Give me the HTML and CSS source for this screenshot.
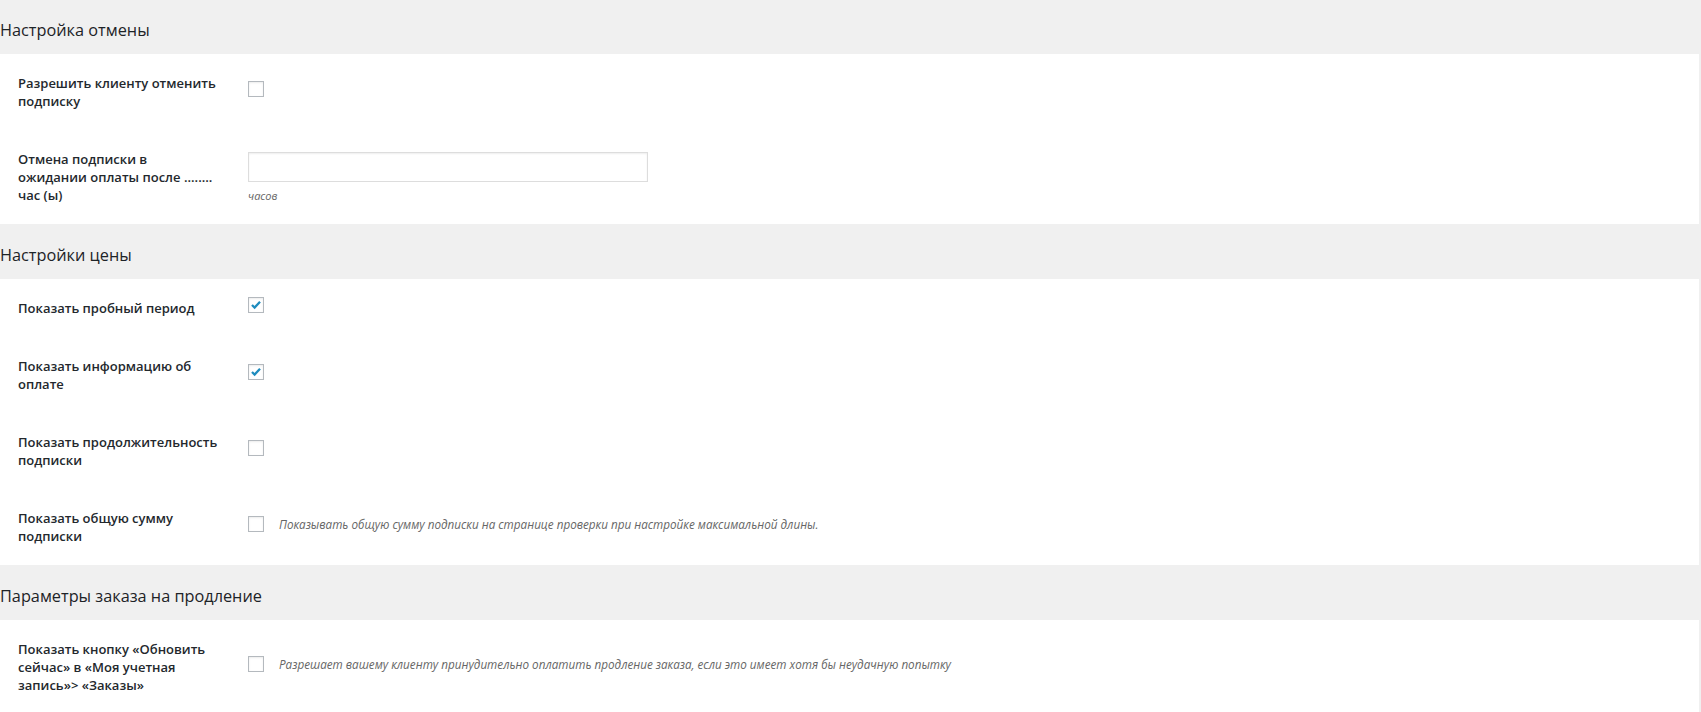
FILE: index.html
```html
<!DOCTYPE html>
<html lang="ru">
<head>
  <meta charset="UTF-8">
  <title>Настройки подписки</title>
  <link rel="stylesheet" href="styles.css">
</head>
<body>
  <h2 class="band first">Настройка отмены</h2>
  <div class="panel">
    <div class="row">
      <div class="label">Разрешить клиенту отменить подписку</div>
      <div class="field"><span class="check"></span></div>
    </div>
    <div class="row">
      <div class="label">Отмена подписки в ожидании оплаты после ........ час (ы)</div>
      <div class="field stack">
        <input class="text-input" type="text">
        <span class="note">часов</span>
      </div>
    </div>
  </div>

  <h2 class="band">Настройки цены</h2>
  <div class="panel">
    <div class="row">
      <div class="label">Показать пробный период</div>
      <div class="field">
        <span class="check">
          <svg viewBox="0 0 16 16" width="16" height="16"><path d="M3.4 8l3 3 6.2-6.8" fill="none" stroke="#1e8cbe" stroke-width="2.6"/></svg>
        </span>
      </div>
    </div>
    <div class="row">
      <div class="label">Показать информацию об оплате</div>
      <div class="field">
        <span class="check">
          <svg viewBox="0 0 16 16" width="16" height="16"><path d="M3.4 8l3 3 6.2-6.8" fill="none" stroke="#1e8cbe" stroke-width="2.6"/></svg>
        </span>
      </div>
    </div>
    <div class="row">
      <div class="label">Показать продолжительность подписки</div>
      <div class="field"><span class="check"></span></div>
    </div>
    <div class="row">
      <div class="label">Показать общую сумму подписки</div>
      <div class="field">
        <span class="check"></span>
        <span class="desc">Показывать общую сумму подписки на странице проверки при настройке максимальной длины.</span>
      </div>
    </div>
  </div>

  <h2 class="band">Параметры заказа на продление</h2>
  <div class="panel">
    <div class="row">
      <div class="label">Показать кнопку «Обновить сейчас» в «Моя учетная запись»&gt; «Заказы»</div>
      <div class="field">
        <span class="check"></span>
        <span class="desc">Разрешает вашему клиенту принудительно оплатить продление заказа, если это имеет хотя бы неудачную попытку</span>
      </div>
    </div>
  </div>
</body>
</html>
```

FILE: styles.css
```css
body {
  margin: 0;
  background: #f0f0f0;
  font-family: "Open Sans", "Noto Sans", sans-serif;
  color: #23282d;
}
.band {
  margin: 0;
  height: 55px;
  box-sizing: border-box;
  padding-top: 6px;
  display: flex;
  align-items: center;
  font-size: 16.3px;
  font-weight: 400;
  color: #1d2327;
}
.band.first {
  height: 54px;
}
.panel {
  background: #fff;
  margin-right: 2px;
}
.row {
  display: flex;
  align-items: center;
}
.label {
  width: 200px;
  padding: 20px 0 20px 18px;
  margin-right: 30px;
  font-size: 13px;
  font-weight: 600;
  line-height: 18px;
}
.field {
  display: flex;
  align-items: center;
}
.field.stack {
  flex-direction: column;
  align-items: flex-start;
}
.check {
  width: 16px;
  height: 16px;
  box-sizing: border-box;
  border: 1px solid #b4b9be;
  background: #fff;
  box-shadow: inset 0 1px 2px rgba(0, 0, 0, 0.08);
  margin-top: -7px;
  display: flex;
  align-items: center;
  justify-content: center;
}
.check svg {
  display: block;
  width: 14px;
  height: 14px;
}
.desc {
  margin-left: 15px;
  margin-top: -7px;
  font-size: 11.7px;
  font-style: italic;
  color: #666;
}
.text-input {
  width: 400px;
  height: 30px;
  box-sizing: border-box;
  margin: 0;
  border: 1px solid #ddd;
  box-shadow: inset 0 1px 2px rgba(0, 0, 0, 0.07);
  background: #fff;
}
.note {
  margin-top: 6px;
  font-size: 11px;
  font-style: italic;
  color: #666;
}
```
